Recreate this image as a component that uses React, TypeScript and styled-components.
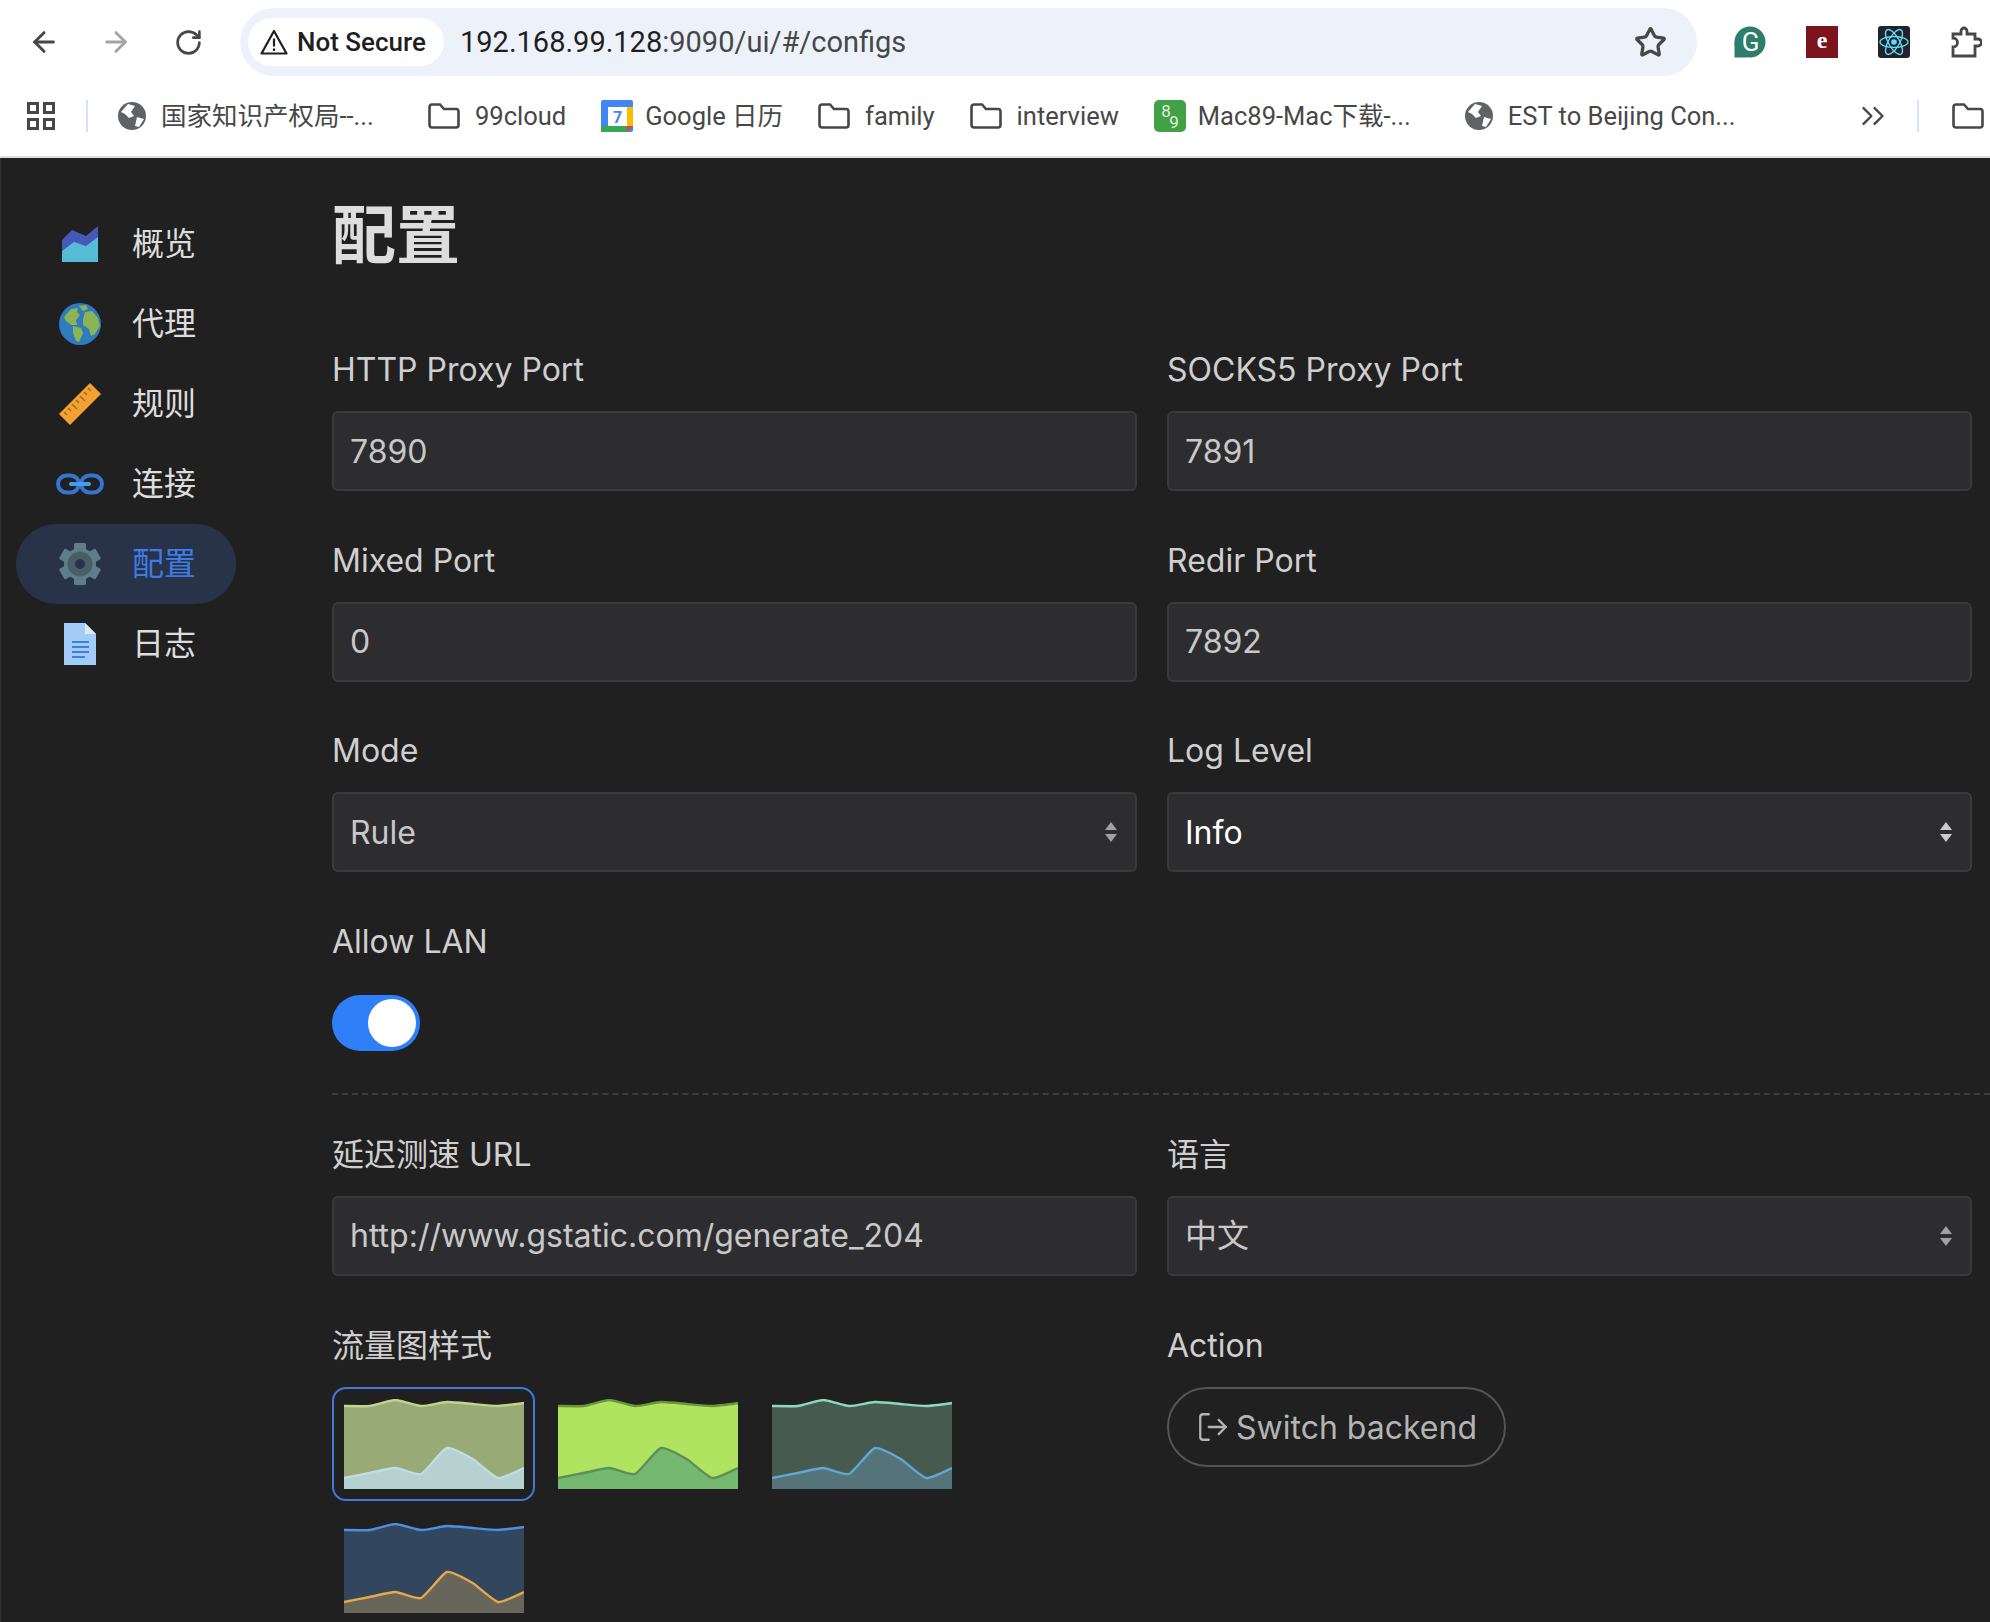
import { ArrowLeft, ArrowRight, ChevronsRight, LogOut, RotateCw, Star } from 'lucide-react'
import styled, { createGlobalStyle } from 'styled-components'

const UI_FONT = `Inter, "Noto Sans CJK SC", sans-serif`
const CHROME_FONT = `Roboto, "Noto Sans CJK SC", sans-serif`

const GlobalStyle = createGlobalStyle`
  html, body {
    margin: 0;
    height: 1622px;
    overflow: hidden;
    background: #202020;
  }
  * {
    box-sizing: border-box;
  }
`

const upperLine = [7, 7, 1, 7, 3, 5, 7, 4]
const lowerLine = [79, 74, 69, 75, 49, 60, 79, 69]
const stepX = 180 / 7

// soft catmull-rom curve, the chart library rounds its tips a little
const toCurve = (values: number[]) => {
  const pts = values.map((y, i) => [i * stepX, y])
  let d = `M0,${values[0]}`
  for (let i = 0; i < pts.length - 1; i++) {
    const p0 = pts[Math.max(i - 1, 0)]
    const p1 = pts[i]
    const p2 = pts[i + 1]
    const p3 = pts[Math.min(i + 2, pts.length - 1)]
    const k = 0.09
    const c1 = [p1[0] + (p2[0] - p0[0]) * k, p1[1] + (p2[1] - p0[1]) * k]
    const c2 = [p2[0] - (p3[0] - p1[0]) * k, p2[1] - (p3[1] - p1[1]) * k]
    d += ` C${c1[0].toFixed(1)},${c1[1].toFixed(1)} ${c2[0].toFixed(1)},${c2[1].toFixed(1)} ${p2[0].toFixed(1)},${p2[1]}`
  }
  return d
}

const chartThemes = [
  { fill: '#98ab76', line: '#c3d28c', lowFill: '#b7d0d0', lowLine: '#bfdde6' },
  { fill: '#b0e35f', line: '#6b9636', lowFill: '#75b86f', lowLine: '#5d8f59' },
  { fill: '#475a50', line: '#8ed8bf', lowFill: '#54747a', lowLine: '#61a6d5' },
  { fill: '#32465e', line: '#4f8ee0', lowFill: '#68665a', lowLine: '#e8a84a' },
]

const TrafficChart = ({ theme }: { theme: (typeof chartThemes)[number] }) => (
  <svg width="180" height="90" viewBox="0 0 180 90">
    <path d={`${toCurve(upperLine)} L180,90 L0,90 Z`} fill={theme.fill} />
    <path d={toCurve(upperLine)} fill="none" stroke={theme.line} strokeWidth="2.4" />
    <path d={`${toCurve(lowerLine)} L180,90 L0,90 Z`} fill={theme.lowFill} />
    <path d={toCurve(lowerLine)} fill="none" stroke={theme.lowLine} strokeWidth="2.4" />
  </svg>
)

const OverviewIcon = () => (
  <svg width="36" height="36" viewBox="0 0 36 36">
    <polygon points="0,26 0,14 10,4 24,10 36,0 36,20 24,22 12,20" fill="#4658b8" />
    <polygon points="0,25 12,16 24,20 36,11 36,36 0,36" fill="#56bcd6" />
  </svg>
)

const ProxyIcon = () => (
  <svg width="42" height="42" viewBox="0 0 42 42">
    <circle cx="21" cy="21" r="21" fill="#2f7bbf" />
    <path d="M5 14 L12 6 L19 5 L18 9 L21 12 L17 17 L18 22 L12 22 L7 18 Z" fill="#8bb553" />
    <path d="M14 23 L22 25 L24 30 L20 39 L17 38 L14 30 Z" fill="#8bb553" />
    <path d="M26 9 L33 8 L39 15 L41 23 L36 31 L32 33 L30 26 L24 22 L24 16 Z" fill="#8bb553" />
    <path d="M20 3 L27 2 L29 6 L24 8 Z" fill="#8bb553" />
  </svg>
)

const RulesIcon = () => (
  <svg width="42" height="42" viewBox="0 0 42 42">
    <polygon points="31,0 42,11 11,42 0,31" fill="#f5a033" />
    <path
      d="M29 5 l3 3 M25 9 l3 3 M21 13 l5 5 M17 17 l3 3 M13 21 l5 5 M9 25 l3 3 M5 29 l3 3"
      stroke="#a86d1f"
      strokeWidth="1.6"
    />
  </svg>
)

const ConnectionsIcon = () => (
  <svg width="48" height="22" viewBox="0 0 48 22">
    <rect x="2" y="2.5" width="21" height="17" rx="8.5" fill="none" stroke="#3376cc" strokeWidth="4" />
    <rect x="25" y="2.5" width="21" height="17" rx="8.5" fill="none" stroke="#3376cc" strokeWidth="4" />
    <rect x="13" y="9" width="22" height="4" rx="2" fill="#4a9bf0" />
  </svg>
)

const ConfigIcon = () => (
  <svg width="42" height="42" viewBox="0 0 42 42">
    <g fill="#607d8b">
      <rect x="15" y="0" width="12" height="42" rx="1.5" />
      <rect x="15" y="0" width="12" height="42" rx="1.5" transform="rotate(60 21 21)" />
      <rect x="15" y="0" width="12" height="42" rx="1.5" transform="rotate(120 21 21)" />
      <circle cx="21" cy="21" r="16" />
    </g>
    <circle cx="21" cy="21" r="12.5" fill="#4b5d69" />
    <circle cx="21" cy="21" r="5" fill="#28334a" />
  </svg>
)

const LogsIcon = () => (
  <svg width="32" height="42" viewBox="0 0 32 42">
    <polygon points="0,0 21,0 32,11 32,42 0,42" fill="#a2cbf7" />
    <polygon points="21,0 32,11 21,11" fill="#dceafa" />
    <path d="M8 19 H25 M8 24 H25 M8 29 H25 M8 34 H21" stroke="#3f80d6" strokeWidth="2" />
  </svg>
)

const AppsIcon = () => (
  <svg width="28" height="28" viewBox="0 0 28 28" fill="none" stroke="#474747" strokeWidth="3">
    <rect x="1.5" y="1.5" width="9" height="9" />
    <rect x="17.5" y="1.5" width="9" height="9" />
    <rect x="1.5" y="17.5" width="9" height="9" />
    <rect x="17.5" y="17.5" width="9" height="9" />
  </svg>
)

const GlobeIcon = () => (
  <svg width="28" height="28" viewBox="0 0 28 28">
    <circle cx="14" cy="14" r="14" fill="#5f6368" />
    <path d="M10 2 L17 4 L13 10 L16 14 L11 16 L7 12 L3 10 Z M19 15 L26 17 L21 25 L17 24 Z" fill="#fff" />
  </svg>
)

const FolderIcon = () => (
  <svg width="32" height="26" viewBox="0 0 32 26" fill="none" stroke="#474747" strokeWidth="2.6">
    <path d="M1.5 4 a2.5 2.5 0 0 1 2.5 -2.5 H12 L16 6 H28 a2.5 2.5 0 0 1 2.5 2.5 V22 a2.5 2.5 0 0 1 -2.5 2.5 H4 a2.5 2.5 0 0 1 -2.5 -2.5 Z" />
  </svg>
)

const CalendarIcon = () => (
  <svg width="32" height="32" viewBox="0 0 32 32">
    <rect width="32" height="32" rx="2" fill="#4285f4" />
    <rect x="26" y="7" width="6" height="19" fill="#fbbc04" />
    <rect y="26" width="26" height="6" fill="#34a853" />
    <rect x="7" y="7" width="19" height="19" fill="#fff" />
    <polygon points="26,26 32,26 26,32" fill="#ea4335" />
    <text x="16.5" y="23" textAnchor="middle" fontSize="16" fontWeight="700" fill="#4285f4" fontFamily="Roboto, sans-serif">7</text>
  </svg>
)

const Mac89Icon = () => (
  <svg width="32" height="32" viewBox="0 0 32 32">
    <rect width="32" height="32" rx="5" fill="#43a047" />
    <text x="12" y="17" textAnchor="middle" fontSize="17" fill="#dff2d8" fontFamily="Roboto, sans-serif">8</text>
    <text x="20" y="28" textAnchor="middle" fontSize="17" fill="#dff2d8" fontFamily="Roboto, sans-serif">9</text>
  </svg>
)

const GrammarlyIcon = () => (
  <svg width="32" height="32" viewBox="0 0 32 32">
    <circle cx="16" cy="16" r="15.5" fill="#2e7d6b" />
    <rect x="0.5" y="16" width="12" height="15.5" fill="#2e7d6b" />
    <text x="16.5" y="25" textAnchor="middle" fontSize="26" fill="#fff" fontFamily="Roboto, sans-serif">G</text>
  </svg>
)

const RedExtensionIcon = () => (
  <svg width="32" height="32" viewBox="0 0 32 32">
    <rect width="32" height="32" fill="#7c1420" />
    <text x="16" y="22" textAnchor="middle" fontSize="24" fontWeight="700" fill="#fff" fontFamily="Liberation Serif, serif">e</text>
  </svg>
)

const ReactIcon = () => (
  <svg width="32" height="32" viewBox="0 0 32 32">
    <rect width="32" height="32" rx="3" fill="#20232a" />
    <g fill="none" stroke="#61dafb" strokeWidth="1.4">
      <ellipse cx="16" cy="16" rx="14" ry="5.5" />
      <ellipse cx="16" cy="16" rx="14" ry="5.5" transform="rotate(60 16 16)" />
      <ellipse cx="16" cy="16" rx="14" ry="5.5" transform="rotate(120 16 16)" />
    </g>
    <circle cx="16" cy="16" r="2.8" fill="#61dafb" />
  </svg>
)

const PuzzleIcon = () => (
  <svg width="32" height="32" viewBox="0 0 32 32" fill="none" stroke="#474747" strokeWidth="2.8">
    <path d="M3 8 H11 V5 a3 3 0 0 1 6 0 V8 H25 V13 H28 a3 3 0 0 1 0 7 H25 V30 H3 V21 a4.5 4.5 0 0 0 0 -9 Z" />
  </svg>
)

const WarningIcon = () => (
  <svg width="28" height="26" viewBox="0 0 28 26">
    <path d="M14 2 L26.5 24.5 H1.5 Z" fill="none" stroke="#1f1f1f" strokeWidth="2.2" strokeLinejoin="round" />
    <path d="M14 9.5 V17.5 M14 19.5 V22" stroke="#1f1f1f" strokeWidth="2.2" />
  </svg>
)

const SelectArrows = () => (
  <svg width="12" height="20" viewBox="0 0 12 20" fill="currentColor">
    <polygon points="6,0 12,8 0,8" />
    <polygon points="0,12 12,12 6,20" />
  </svg>
)

const navItems = [
  { label: '概览', icon: <OverviewIcon /> },
  { label: '代理', icon: <ProxyIcon /> },
  { label: '规则', icon: <RulesIcon /> },
  { label: '连接', icon: <ConnectionsIcon /> },
  { label: '配置', icon: <ConfigIcon />, active: true },
  { label: '日志', icon: <LogsIcon /> },
]

export default function App() {
  return (
    <>
      <GlobalStyle />
      <Window>
        <BrowserChrome>
          <Toolbar>
            <NavButton><ArrowLeft size={32} strokeWidth={2.2} /></NavButton>
            <NavButton $disabled><ArrowRight size={32} strokeWidth={2.2} /></NavButton>
            <NavButton><RotateCw size={29} strokeWidth={2.2} /></NavButton>
            <AddressBar>
              <SecurityChip>
                <WarningIcon />
                Not Secure
              </SecurityChip>
              <Url>
                192.168.99.128<UrlRest>:9090/ui/#/configs</UrlRest>
              </Url>
              <StarSlot><Star size={33} strokeWidth={2.4} /></StarSlot>
            </AddressBar>
            <Extensions>
              <GrammarlyIcon />
              <RedExtensionIcon />
              <ReactIcon />
              <PuzzleIcon />
            </Extensions>
          </Toolbar>
          <BookmarksBar>
            <AppsIcon />
            <BarDivider />
            <Bookmark $labelWidth={232}><GlobeIcon /><span>国家知识产权局--...</span></Bookmark>
            <Bookmark><FolderIcon /><span>99cloud</span></Bookmark>
            <Bookmark $gap={12}><CalendarIcon /><span>Google 日历</span></Bookmark>
            <Bookmark><FolderIcon /><span>family</span></Bookmark>
            <Bookmark><FolderIcon /><span>interview</span></Bookmark>
            <Bookmark $gap={12} $labelWidth={232}><Mac89Icon /><span>Mac89-Mac下载-...</span></Bookmark>
            <Bookmark $labelWidth={311}><GlobeIcon /><span>EST to Beijing Con...</span></Bookmark>
            <ChevronsRight size={38} color="#474747" strokeWidth={1.5} />
            <BarDivider $wide />
            <FolderIcon />
          </BookmarksBar>
        </BrowserChrome>

        <Dashboard>
          <SideBar>
            {navItems.map((item) => (
              <NavItem key={item.label} $active={item.active}>
                <NavIcon>{item.icon}</NavIcon>
                <NavLabel>{item.label}</NavLabel>
              </NavItem>
            ))}
          </SideBar>

          <Content>
            <Title>配置</Title>
            <FieldGrid>
              <Field>
                <FieldLabel>HTTP Proxy Port</FieldLabel>
                <TextInput readOnly value="7890" />
              </Field>
              <Field>
                <FieldLabel>SOCKS5 Proxy Port</FieldLabel>
                <TextInput readOnly value="7891" />
              </Field>
              <Field>
                <FieldLabel>Mixed Port</FieldLabel>
                <TextInput readOnly value="0" />
              </Field>
              <Field>
                <FieldLabel>Redir Port</FieldLabel>
                <TextInput readOnly value="7892" />
              </Field>
              <Field>
                <FieldLabel>Mode</FieldLabel>
                <SelectWrap>
                  <SelectBox defaultValue="Rule">
                    <option>Rule</option>
                    <option>Global</option>
                    <option>Direct</option>
                  </SelectBox>
                  <ArrowSlot><SelectArrows /></ArrowSlot>
                </SelectWrap>
              </Field>
              <Field>
                <FieldLabel>Log Level</FieldLabel>
                <SelectWrap $bright>
                  <SelectBox defaultValue="Info">
                    <option>Info</option>
                    <option>Debug</option>
                    <option>Warning</option>
                  </SelectBox>
                  <ArrowSlot><SelectArrows /></ArrowSlot>
                </SelectWrap>
              </Field>
              <Field>
                <FieldLabel>Allow LAN</FieldLabel>
                <Toggle aria-label="Allow LAN"><ToggleThumb /></Toggle>
              </Field>
            </FieldGrid>

            <Separator />

            <FieldGrid $rowGap={46.5}>
              <Field>
                <FieldLabel>延迟测速 URL</FieldLabel>
                <TextInput readOnly value="http://www.gstatic.com/generate_204" />
              </Field>
              <Field>
                <FieldLabel>语言</FieldLabel>
                <SelectWrap>
                  <SelectBox defaultValue="中文">
                    <option>中文</option>
                    <option>English</option>
                  </SelectBox>
                  <ArrowSlot><SelectArrows /></ArrowSlot>
                </SelectWrap>
              </Field>
              <Field>
                <FieldLabel>流量图样式</FieldLabel>
                <ChartPicker>
                  {chartThemes.map((theme, i) => (
                    <ChartOption key={theme.fill} $selected={i === 0}>
                      <TrafficChart theme={theme} />
                    </ChartOption>
                  ))}
                </ChartPicker>
              </Field>
              <Field>
                <FieldLabel>Action</FieldLabel>
                <BackendButton>
                  <LogOut size={34} strokeWidth={1.6} />
                  Switch backend
                </BackendButton>
              </Field>
            </FieldGrid>
          </Content>
        </Dashboard>
      </Window>
    </>
  )
}

const Window = styled.div`
  width: 1990px;
  height: 1622px;
  overflow: hidden;
  display: flex;
  flex-direction: column;
`

const BrowserChrome = styled.header`
  height: 158px;
  flex: none;
  background: #fff;
  border-bottom: 2px solid #e0e0e0;
  font-family: ${CHROME_FONT};
  overflow: hidden;
`

const Toolbar = styled.div`
  height: 84px;
  padding: 8px 0 8px 8px;
  display: flex;
  align-items: center;
`

const NavButton = styled.div<{ $disabled?: boolean }>`
  width: 72px;
  display: flex;
  justify-content: center;
  color: ${(p) => (p.$disabled ? '#a5a5a5' : '#474747')};
`

const AddressBar = styled.div`
  width: 1457px;
  height: 68px;
  margin-left: 16px;
  padding: 0 8px;
  flex: none;
  display: flex;
  align-items: center;
  border-radius: 34px;
  background: #edf2fa;
`

const SecurityChip = styled.div`
  height: 48px;
  width: 196px;
  padding-left: 12px;
  display: flex;
  align-items: center;
  gap: 9px;
  border-radius: 24px;
  background: #fff;
  color: #1f1f1f;
  font-size: 26px;
  font-weight: 500;
`

const Url = styled.div`
  margin-left: 16px;
  flex: 1;
  font-size: 29px;
  color: #1f1f1f;
`

const UrlRest = styled.span`
  color: #474747;
`

const StarSlot = styled.div`
  margin-right: 22px;
  display: flex;
  color: #474747;
`

const Extensions = styled.div`
  margin-left: 37px;
  display: flex;
  gap: 40px;
  flex: none;
`

const BookmarksBar = styled.div`
  height: 64px;
  padding: 0 0 0 27px;
  display: flex;
  align-items: center;
  color: #474747;
  font-size: 25.5px;

  > svg {
    flex: none;
  }
`

const BarDivider = styled.div<{ $wide?: boolean }>`
  width: 2px;
  height: 32px;
  flex: none;
  margin: ${(p) => (p.$wide ? '0 33px 0 25px' : '0 30px 0 31px')};
  background: #d3e3fd;
`

const Bookmark = styled.div<{ $labelWidth?: number; $gap?: number }>`
  display: flex;
  flex: none;
  align-items: center;
  gap: ${(p) => p.$gap ?? 15}px;
  margin-right: 35px;
  white-space: nowrap;

  svg {
    flex: none;
  }

  span {
    line-height: 32px;
    width: ${(p) => (p.$labelWidth ? `${p.$labelWidth}px` : 'auto')};
  }
`

const Dashboard = styled.div`
  flex: 1;
  min-height: 0;
  display: flex;
  background: #202020;
  border-left: 1px solid #333;
  font-family: ${UI_FONT};
`

const SideBar = styled.nav`
  width: 331px;
  flex: none;
  padding: 46px 0 0 15px;
`

const NavItem = styled.div<{ $active?: boolean }>`
  width: 220px;
  height: 80px;
  display: flex;
  align-items: center;
  border-radius: 40px;
  background: ${(p) => (p.$active ? '#28334a' : 'transparent')};
  color: ${(p) => (p.$active ? '#3f7be0' : '#dddddd')};
  font-size: 32px;
`

const NavIcon = styled.div`
  width: 128px;
  margin-right: -12px;
  display: flex;
  justify-content: center;
  flex: none;
`

const NavLabel = styled.span`
  line-height: 40px;
`

const Content = styled.main`
  flex: 1;
  min-width: 0;
  padding: 0 19px 0 0;
`

const Title = styled.h1`
  margin: 0;
  height: 188px;
  padding-top: 34px;
  color: #dddddd;
  font-size: 64px;
  line-height: 86px;
  font-weight: 700;
`

const FieldGrid = styled.div<{ $rowGap?: number }>`
  display: grid;
  grid-template-columns: 805px 805px;
  column-gap: 30px;
  row-gap: ${(p) => p.$rowGap ?? 45.5}px;
`

const Field = styled.div`
  min-width: 0;
  display: flex;
  flex-direction: column;
`

const FieldLabel = styled.div`
  height: 46px;
  margin-bottom: 19px;
  color: #cfcfcf;
  font-size: 32px;
  line-height: 48px;
`

const TextInput = styled.input`
  display: block;
  width: 100%;
  height: 80px;
  padding: 0 16px;
  border: 2px solid #3a3a3d;
  border-radius: 6px;
  outline: none;
  background: #2d2d30;
  color: #c8c8c8;
  font-family: inherit;
  font-size: 32px;
`

const SelectWrap = styled.div<{ $bright?: boolean }>`
  position: relative;
  color: ${(p) => (p.$bright ? '#ffffff' : '#c8c8c8')};
`

const SelectBox = styled.select`
  display: block;
  width: 100%;
  height: 80px;
  padding: 0 40px 0 16px;
  appearance: none;
  border: 2px solid #3a3a3d;
  border-radius: 6px;
  outline: none;
  background: #2d2d30;
  color: inherit;
  font-family: inherit;
  font-size: 32px;
`

const ArrowSlot = styled.span`
  position: absolute;
  top: 30px;
  right: 20px;
  display: flex;
  opacity: 0.75;
  pointer-events: none;
`

const Toggle = styled.div`
  width: 88px;
  height: 56px;
  margin-top: 12px;
  padding: 4px;
  display: flex;
  justify-content: flex-end;
  border-radius: 28px;
  background: #2f7ff8;
`

const ToggleThumb = styled.div`
  width: 48px;
  height: 48px;
  border-radius: 50%;
  background: #fff;
`

const Separator = styled.hr`
  height: 0;
  margin: 42px -19px 36px 0;
  border: 0;
  border-top: 2px dashed #3d3d3d;
`

const ChartPicker = styled.div`
  display: flex;
  flex-wrap: wrap;
  gap: 10px 11px;
`

const ChartOption = styled.div<{ $selected?: boolean }>`
  width: 203px;
  height: 114px;
  padding: 10px 10px;
  border: 2px solid ${(p) => (p.$selected ? '#4279d8' : 'transparent')};
  border-radius: 14px;

  svg {
    display: block;
  }
`

const BackendButton = styled.div`
  width: 339px;
  height: 80px;
  display: flex;
  align-items: center;
  justify-content: center;
  gap: 6px;
  border: 2px solid #555;
  border-radius: 40px;
  color: #b4b4b4;
  font-size: 32px;

  svg {
    flex: none;
  }
`
